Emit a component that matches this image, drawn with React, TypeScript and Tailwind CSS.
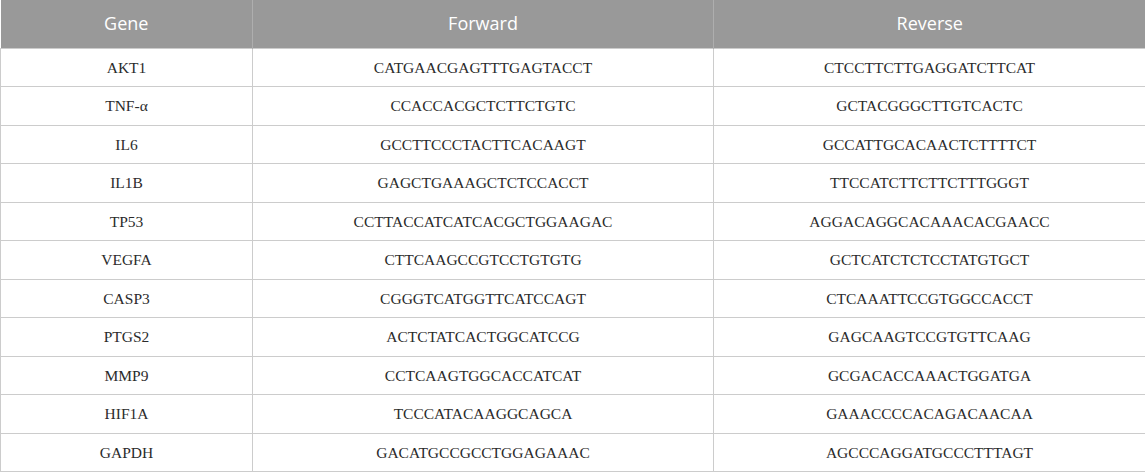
const rows = [
  ['AKT1', 'CATGAACGAGTTTGAGTACCT', 'CTCCTTCTTGAGGATCTTCAT'],
  ['TNF-α', 'CCACCACGCTCTTCTGTC', 'GCTACGGGCTTGTCACTC'],
  ['IL6', 'GCCTTCCCTACTTCACAAGT', 'GCCATTGCACAACTCTTTTCT'],
  ['IL1B', 'GAGCTGAAAGCTCTCCACCT', 'TTCCATCTTCTTCTTTGGGT'],
  ['TP53', 'CCTTACCATCATCACGCTGGAAGAC', 'AGGACAGGCACAAACACGAACC'],
  ['VEGFA', 'CTTCAAGCCGTCCTGTGTG', 'GCTCATCTCTCCTATGTGCT'],
  ['CASP3', 'CGGGTCATGGTTCATCCAGT', 'CTCAAATTCCGTGGCCACCT'],
  ['PTGS2', 'ACTCTATCACTGGCATCCG', 'GAGCAAGTCCGTGTTCAAG'],
  ['MMP9', 'CCTCAAGTGGCACCATCAT', 'GCGACACCAAACTGGATGA'],
  ['HIF1A', 'TCCCATACAAGGCAGCA', 'GAAACCCCACAGACAACAA'],
  ['GAPDH', 'GACATGCCGCCTGGAGAAAC', 'AGCCCAGGATGCCCTTTAGT'],
]

export default function App() {
  return (
    <div className="w-[1145px] h-[472px] bg-white">
      <table className="w-[1145px] border-collapse table-fixed">
        <colgroup>
          <col className="w-[252px]" />
          <col className="w-[461px]" />
          <col className="w-[432px]" />
        </colgroup>
        <thead>
          <tr className="h-[48px] bg-[#999999] text-white text-[18px] font-['Open_Sans',sans-serif]">
            <th className="font-normal border-r border-[#aeaeae] text-center">Gene</th>
            <th className="font-normal border-r border-[#aeaeae] text-center">Forward</th>
            <th className="font-normal text-center">Reverse</th>
          </tr>
        </thead>
        <tbody className="font-['Liberation_Serif',serif] text-[15.5px] text-[#2b2b2b]">
          {rows.map((r) => (
            <tr key={r[0]} className="h-[38.5px]">
              {r.map((c, i) => (
                <td key={i} className="border border-[#cccccc] text-center align-middle">
                  {c}
                </td>
              ))}
            </tr>
          ))}
        </tbody>
      </table>
    </div>
  )
}
